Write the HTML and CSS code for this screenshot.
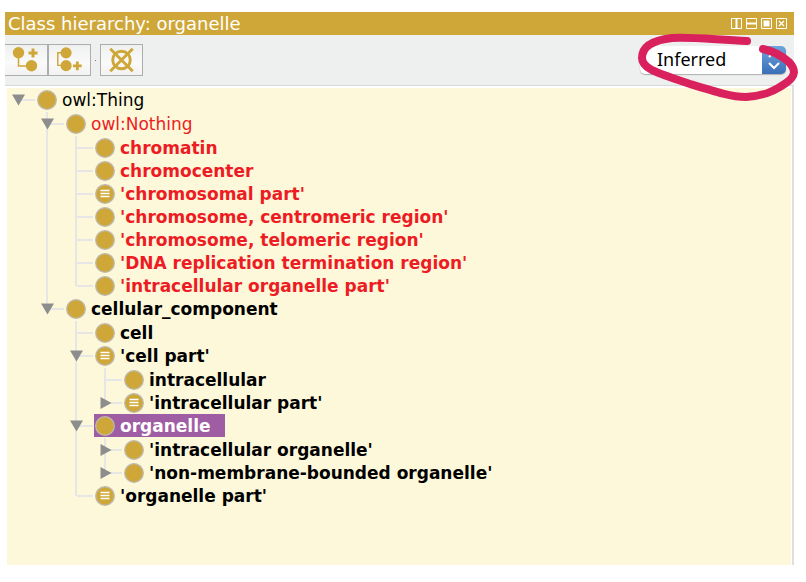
FILE: index.html
```html
<!DOCTYPE html>
<html lang="en">
<head>
<meta charset="utf-8">
<title>Class hierarchy</title>
<link rel="stylesheet" href="styles.css">
</head>
<body>
<svg class="symbols" aria-hidden="true">
  <symbol id="class" viewBox="0 0 20 20"><circle cx="10" cy="10" r="9.300" fill="#cfa738" stroke="#bdb9ae" stroke-width="1.300"/></symbol>
  <symbol id="defined" viewBox="0 0 20 20"><circle cx="10" cy="10" r="9.300" fill="#cfa738" stroke="#bdb9ae" stroke-width="1.300"/><path d="M5.500 6.500h9M5.500 9.500h9M5.500 12.500h9" stroke="#fff" stroke-width="1.500"/></symbol>
  <symbol id="open" viewBox="0 0 13 12"><path d="M0 0.500h13L6.500 11.500z" fill="#8d8d8d"/></symbol>
  <symbol id="closed" viewBox="0 0 13 12"><path d="M1.500 0v12L12.500 6z" fill="#8d8d8d"/></symbol>
</svg>
<main class="panel">
  <header class="titlebar">
    <h1 class="title">Class hierarchy: organelle</h1>
    <div class="window-buttons">
      <button class="window-button" aria-label="Split vertically"><svg viewBox="0 0 13 13"><path d="M1.500 1.500h10v10h-10z"/><path d="M6.500 1.500v10" stroke-width="2"/></svg></button>
      <button class="window-button" aria-label="Split horizontally"><svg viewBox="0 0 13 13"><path d="M1.500 1.500h10v10h-10z"/><path d="M1.500 6.500h10" stroke-width="2"/></svg></button>
      <button class="window-button" aria-label="Float"><svg viewBox="0 0 13 13"><path d="M1.500 1.500h10v10h-10z"/><path d="M3.500 3.500h6v6h-6z" fill="#fff" stroke="none"/></svg></button>
      <button class="window-button" aria-label="Close"><svg viewBox="0 0 13 13"><path d="M1.500 1.500h10v10h-10z"/><path d="M4 4l5 5M9 4l-5 5" stroke-width="1.300"/></svg></button>
    </div>
  </header>
  <div class="toolbar">
    <button class="tool tool-first" aria-label="Add subclass"><svg viewBox="0 0 42 30"><path d="M13.500 8v13h12" fill="none" stroke="#cfa738" stroke-width="1.500"/><circle cx="13.500" cy="7.700" r="5.700"/><circle cx="26.500" cy="20.800" r="5.700"/><path d="M26.500 3.500h3v3h3v3h-3v3h-3v-3h-3v-3h3z"/></svg></button>
    <button class="tool" aria-label="Add sibling class"><svg viewBox="0 0 42 30"><path d="M14 7.500h-5v13h5" fill="none" stroke="#cfa738" stroke-width="1.500"/><circle cx="17.500" cy="7.700" r="5.700"/><circle cx="17.500" cy="20.800" r="5.700"/><path d="M27.500 16.500h3v3h3v3h-3v3h-3v-3h-3v-3h3z"/></svg></button>
    <span class="divider"></span>
    <button class="tool" aria-label="Delete class"><svg viewBox="0 0 42 30"><g fill="none" stroke="#cfa738" stroke-width="3"><circle cx="21" cy="15" r="9"/><path d="M9.500 3.500l23 23M32.500 3.500l-23 23"/></g></svg></button>
    <div class="mode">
      <select class="mode-select" aria-label="Hierarchy mode"><option>Inferred</option><option>Asserted</option></select>
      <svg class="mode-arrows" viewBox="0 0 24 28" aria-hidden="true"><path d="M7 11l5-5 5 5M7 17l5 5 5-5"/></svg>
      <svg class="marker" viewBox="630 25 175 80" aria-hidden="true"><path d="M747 40C718 39 694 36 672 37C654 39 642 45 642 57C642 68 658 72 690 83C716 91 732 96 746 96C764 95 775 90 786 82C796 75 796 69 789 61C782 55 773 50 763 48"/></svg>
    </div>
  </div>
  <div class="view">
    <ul class="tree">
      <li><div class="row"><svg class="toggle"><use href="#open"/></svg><span class="node"><svg class="icon"><use href="#class"/></svg>owl:Thing</span></div>
        <ul>
          <li><div class="row unsat"><svg class="toggle"><use href="#open"/></svg><span class="node"><svg class="icon"><use href="#class"/></svg>owl:Nothing</span></div>
            <ul class="unsat strong">
              <li><div class="row leaf"><span class="node"><svg class="icon"><use href="#class"/></svg>chromatin</span></div></li>
              <li><div class="row leaf"><span class="node"><svg class="icon"><use href="#class"/></svg>chromocenter</span></div></li>
              <li><div class="row leaf"><span class="node"><svg class="icon"><use href="#defined"/></svg>'chromosomal part'</span></div></li>
              <li><div class="row leaf"><span class="node"><svg class="icon"><use href="#class"/></svg>'chromosome, centromeric region'</span></div></li>
              <li><div class="row leaf"><span class="node"><svg class="icon"><use href="#class"/></svg>'chromosome, telomeric region'</span></div></li>
              <li><div class="row leaf"><span class="node"><svg class="icon"><use href="#class"/></svg>'DNA replication termination region'</span></div></li>
              <li><div class="row leaf"><span class="node"><svg class="icon"><use href="#class"/></svg>'intracellular organelle part'</span></div></li>
            </ul>
          </li>
          <li class="strong"><div class="row"><svg class="toggle"><use href="#open"/></svg><span class="node"><svg class="icon"><use href="#class"/></svg>cellular_component</span></div>
            <ul>
              <li><div class="row leaf"><span class="node"><svg class="icon"><use href="#class"/></svg>cell</span></div></li>
              <li><div class="row"><svg class="toggle"><use href="#open"/></svg><span class="node"><svg class="icon"><use href="#defined"/></svg>'cell part'</span></div>
                <ul>
                  <li><div class="row leaf"><span class="node"><svg class="icon"><use href="#class"/></svg>intracellular</span></div></li>
                  <li><div class="row"><svg class="toggle"><use href="#closed"/></svg><span class="node"><svg class="icon"><use href="#defined"/></svg>'intracellular part'</span></div></li>
                </ul>
              </li>
              <li><div class="row"><svg class="toggle"><use href="#open"/></svg><span class="node selected"><svg class="icon"><use href="#class"/></svg>organelle</span></div>
                <ul>
                  <li><div class="row"><svg class="toggle"><use href="#closed"/></svg><span class="node"><svg class="icon"><use href="#class"/></svg>'intracellular organelle'</span></div></li>
                  <li><div class="row"><svg class="toggle"><use href="#closed"/></svg><span class="node"><svg class="icon"><use href="#class"/></svg>'non-membrane-bounded organelle'</span></div></li>
                </ul>
              </li>
              <li><div class="row leaf"><span class="node"><svg class="icon"><use href="#defined"/></svg>'organelle part'</span></div></li>
            </ul>
          </li>
        </ul>
      </li>
    </ul>
  </div>
</main>
</body>
</html>
```
FILE: styles.css
```css
* { box-sizing: border-box; }

body {
  margin: 0;
  min-height: 100vh;
  display: flex;
  padding: 12px 12px 17px 5px;
  background: #fff;
  color: #000;
  font-family: "DejaVu Sans", Verdana, sans-serif;
  font-size: 17px;
}

svg { display: block; flex: none; }
.symbols { position: absolute; width: 0; height: 0; }
button { padding: 0; margin: 0; }

.panel { flex: 1; display: flex; flex-direction: column; }

.titlebar {
  display: flex;
  align-items: center;
  justify-content: space-between;
  height: 23px;
  padding: 0 6px 0 3px;
  background: #cfa738;
}
.title {
  margin: 0;
  color: #fff;
  font-size: 18px;
  font-weight: 400;
  line-height: 23px;
}
.window-buttons { display: flex; gap: 2px; }
.window-button { width: 13px; height: 13px; border: 0; background: none; }
.window-button svg { width: 13px; height: 13px; fill: none; stroke: #fff; stroke-width: 1; }

.toolbar {
  display: flex;
  align-items: center;
  height: 51px;
  padding-right: 8px;
  border-bottom: 1px solid #d8d8d8;
  background: #eeefef;
}
.tool {
  width: 43px;
  height: 32px;
  border: 1px solid #adadad;
  background: linear-gradient(#eff0f0, #fafafa 60%, #f2f2f2);
}
.tool-first { border-left: 0; }
.tool svg { width: 100%; height: 30px; fill: #cfa738; }
.divider { width: 1px; height: 1px; margin: 0 4px; background: #777; }

.mode { position: relative; margin-left: auto; }
.mode-select {
  display: block;
  appearance: none;
  width: 146px;
  height: 28px;
  padding: 0 30px 2px 17px;
  border: 0;
  border-radius: 5px;
  background: linear-gradient(#6fa5dc, #3a70b8) right / 24px 100% no-repeat #fff;
  box-shadow: 0 1px 1px #b0b0b0;
  color: #000;
  font: 18px "Noto Sans", sans-serif;
}
.mode-arrows {
  position: absolute;
  top: 0;
  right: 0;
  width: 24px;
  height: 28px;
  fill: none;
  stroke: #fff;
  stroke-width: 2;
  pointer-events: none;
}
.marker {
  position: absolute;
  top: -20px;
  left: -10px;
  width: 175px;
  height: 80px;
  fill: none;
  stroke: #d8215d;
  stroke-width: 8;
  stroke-linecap: round;
  pointer-events: none;
}

.view {
  flex: 1;
  display: flex;
  padding: 2px 1px 0 2px;
  border-right: 2px solid #dfdfdf;
}
.tree { flex: 1; background: #fdf8d9; }
ul { margin: 0; padding: 0; list-style: none; }
.tree ul { padding: 1px 0 0 29px; }

.tree li li {
  background: linear-gradient(#e6e6e6, #e6e6e6) 10px 0 / 2px 100% no-repeat;
}
.tree li li:last-child { background-size: 2px 12px; }

.row {
  display: flex;
  align-items: center;
  height: 23px;
  padding-left: 5px;
  white-space: nowrap;
  background: linear-gradient(#e6e6e6, #e6e6e6) 12px 11px / 16px 2px no-repeat;
}
.leaf { padding-left: 29px; }
.toggle { width: 13px; height: 12px; margin-right: 11px; }
.node { display: flex; align-items: center; height: 23px; gap: 5px; padding: 0 14px 0 1px; }
.icon { width: 20px; height: 20px; }
.unsat { color: #ed1c24; }
.strong { font-weight: 700; }
.selected { background: #9f5da3; color: #fff; }
```
